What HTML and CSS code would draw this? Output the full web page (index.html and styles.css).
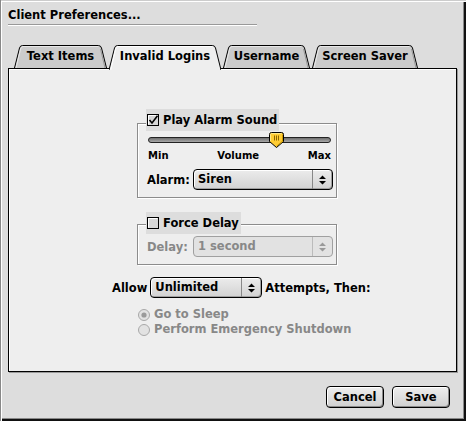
FILE: index.html
```html
<!DOCTYPE html>
<html lang="en">
<head>
  <meta charset="UTF-8" />
  <meta name="viewport" content="width=device-width, initial-scale=1.0"/>
  <title>Client Preferences</title>
  <link rel="stylesheet" href="styles.css">
</head>
<body>
  <div class="window">
    <h1 class="title">Client Preferences...</h1>
    <div class="title-rule"></div>

    <div class="tabs">
      <div class="tab tab-text">
        <svg class="tab-shape" width="93" height="23" viewBox="0 0 93 23">
          <path d="M0.5 23L5.5 3Q6.2 0.5 8.5 0.5H84.5Q86.8 0.5 87.5 3L92.5 23" fill="#cbcbcb" stroke="#000"/>
          <path d="M2 23L6.6 4Q7.3 1.5 9 1.5H84" fill="none" stroke="#e8e8e8"/>
          <path d="M86.5 4L91 23" fill="none" stroke="#999"/>
        </svg>
        <span class="tab-label">Text Items</span>
      </div>
      <div class="tab tab-logins is-active">
        <svg class="tab-shape" width="112" height="25" viewBox="0 0 112 25">
          <path d="M0 25L5.5 3Q6.2 0.5 8.5 0.5H103.5Q105.8 0.5 106.5 3L112 25" fill="#eee" stroke="#000"/>
          <path d="M1.8 25L6.6 4Q7.3 1.5 9 1.5H103" fill="none" stroke="#fff"/>
        </svg>
        <span class="tab-label">Invalid Logins</span>
      </div>
      <div class="tab tab-user">
        <svg class="tab-shape" width="87" height="23" viewBox="0 0 87 23">
          <path d="M0.5 23L5.5 3Q6.2 0.5 8.5 0.5H78.5Q80.8 0.5 81.5 3L86.5 23" fill="#cbcbcb" stroke="#000"/>
          <path d="M2 23L6.6 4Q7.3 1.5 9 1.5H78" fill="none" stroke="#e8e8e8"/>
          <path d="M80.5 4L85 23" fill="none" stroke="#999"/>
        </svg>
        <span class="tab-label">Username</span>
      </div>
      <div class="tab tab-saver">
        <svg class="tab-shape" width="106" height="23" viewBox="0 0 106 23">
          <path d="M0.5 23L5.5 3Q6.2 0.5 8.5 0.5H97.5Q99.8 0.5 100.5 3L105.5 23" fill="#cbcbcb" stroke="#000"/>
          <path d="M2 23L6.6 4Q7.3 1.5 9 1.5H97" fill="none" stroke="#e8e8e8"/>
          <path d="M99.5 4L104 23" fill="none" stroke="#999"/>
        </svg>
        <span class="tab-label">Screen Saver</span>
      </div>
    </div>

    <div class="panel">
      <div class="group group-alarm">
        <div class="legend">
          <svg class="checkbox" width="12" height="12" viewBox="0 0 12 12">
            <rect x="0.5" y="0.5" width="11" height="11" fill="#d6d6d6" stroke="#000"/>
            <path d="M1.5 10.5V1.5H10.5" fill="none" stroke="#fff"/>
            <path d="M2.5 6L5 9L10.5 1.8" fill="none" stroke="#000" stroke-width="1.6"/>
          </svg>
          <span>Play Alarm Sound</span>
        </div>
        <div class="slider">
          <svg class="slider-thumb" width="15" height="16" viewBox="0 0 15 16">
            <path d="M0.5 2.5Q0.5 0.5 2.5 0.5H12.5Q14.5 0.5 14.5 2.5V9.5L7.5 15.5L0.5 9.5Z" fill="#fc3" stroke="#000"/>
            <path d="M1.5 9V2.5Q1.5 1.5 2.5 1.5H12.5" fill="none" stroke="#ffe88a"/>
            <path d="M13.5 2.5V9.1L7.5 14.2" fill="none" stroke="#c90"/>
            <path d="M5.5 3.5V8.5M7.5 3.5V8.5M9.5 3.5V8.5" stroke="#8a6400"/>
          </svg>
        </div>
        <div class="slider-labels">
          <span>Min</span>
          <span>Volume</span>
          <span>Max</span>
        </div>
        <div class="field">
          <span>Alarm:</span>
          <div class="popup popup-alarm">
            <span class="popup-value">Siren</span>
            <span class="popup-arrows">
              <svg width="7" height="10" viewBox="0 0 7 10"><path d="M0 4H7L3.5 0.5ZM0 6H7L3.5 9.5Z" fill="#000"/></svg>
            </span>
          </div>
        </div>
      </div>

      <div class="group group-delay">
        <div class="legend">
          <svg class="checkbox" width="12" height="12" viewBox="0 0 12 12">
            <rect x="0.5" y="0.5" width="11" height="11" fill="#d6d6d6" stroke="#000"/>
            <path d="M1.5 10.5V1.5H10.5" fill="none" stroke="#fff"/>
          </svg>
          <span>Force Delay</span>
        </div>
        <div class="field is-disabled">
          <span>Delay:</span>
          <div class="popup popup-delay">
            <span class="popup-value">1 second</span>
            <span class="popup-arrows">
              <svg width="7" height="10" viewBox="0 0 7 10"><path d="M0 4H7L3.5 0.5ZM0 6H7L3.5 9.5Z" fill="#999"/></svg>
            </span>
          </div>
        </div>
      </div>

      <div class="allow-row">
        <span>Allow</span>
        <div class="popup popup-attempts">
          <span class="popup-value">Unlimited</span>
          <span class="popup-arrows">
            <svg width="7" height="10" viewBox="0 0 7 10"><path d="M0 4H7L3.5 0.5ZM0 6H7L3.5 9.5Z" fill="#000"/></svg>
          </span>
        </div>
        <span>Attempts, Then:</span>
      </div>

      <div class="radios">
        <div class="radio">
          <svg width="12" height="12" viewBox="0 0 12 12">
            <circle cx="6" cy="6" r="5.5" fill="#e2e2e2" stroke="#a8a8a8"/>
            <circle cx="6" cy="6" r="2.6" fill="#9a9a9a"/>
          </svg>
          <span>Go to Sleep</span>
        </div>
        <div class="radio">
          <svg width="12" height="12" viewBox="0 0 12 12">
            <circle cx="6" cy="6" r="5.5" fill="#e2e2e2" stroke="#a8a8a8"/>
          </svg>
          <span>Perform Emergency Shutdown</span>
        </div>
      </div>
    </div>

    <div class="footer">
      <button class="button">Cancel</button>
      <button class="button">Save</button>
    </div>
  </div>
</body>
</html>
```

FILE: styles.css
```css
* {
  box-sizing: border-box;
  margin: 0;
  padding: 0;
}

body {
  background: #ddd;
}

.window {
  width: 466px;
  height: 421px;
  background: #ddd;
  overflow: hidden;
  color: #000;
  font-family: "DejaVu Sans", "Liberation Sans", sans-serif;
  font-size: 11.5px;
  font-weight: bold;
  box-shadow:
    inset 1px 0 0 #888,
    inset 0 1px 0 #ccc,
    inset 2px 2px 0 #fff,
    inset -2px -2px 0 #111,
    inset -3px -3px 0 #888;
}

.title {
  padding: 7px 0 0 8px;
  font-size: 11.5px;
  line-height: 16px;
}

.title-rule {
  margin: 1px 0 0 8px;
  width: 249px;
  height: 2px;
  border-top: 1px solid #999;
  border-bottom: 1px solid #fff;
}

/* tabs */

.tabs {
  position: relative;
  z-index: 2;
  display: flex;
  align-items: flex-start;
  gap: 2px;
  height: 23px;
  margin: 19px 0 0 14px;
}

.tab {
  position: relative;
  height: 23px;
}

.tab.is-active {
  height: 25px;
}

.tab-shape {
  position: absolute;
  top: 0;
  left: 0;
}

.tab-label {
  position: relative;
  display: block;
  line-height: 23px;
  text-align: center;
}

.tab-text { width: 93px; }
.tab-logins { width: 112px; }
.tab-user { width: 87px; }
.tab-saver { width: 106px; }

.panel {
  position: relative;
  z-index: 1;
  margin-left: 8px;
  width: 449px;
  height: 304px;
  border: 1px solid #000;
  background: #eee;
  box-shadow: inset 1px 1px 0 #fff, 1px 1px 0 #999;
}

/* group boxes */

.group {
  margin-left: 128px;
  width: 200px;
  padding-bottom: 7px;
  border: 1px solid #8c8c8c;
  box-shadow: inset 1px 1px 0 #fff, 1px 1px 0 #fff;
}

.group-alarm {
  margin-top: 54px;
}

.group-delay {
  margin-top: 26px;
}

.legend {
  display: flex;
  align-items: center;
  gap: 4px;
  width: max-content;
  height: 22px;
  margin: -15px 0 0 8px;
  padding: 0 2px 0 1px;
  background: #ddd;
}

.group-delay .legend {
  margin-top: -13px;
}

.checkbox {
  display: block;
  flex: none;
}

.slider {
  position: relative;
  margin: 6px 0 0 10px;
  width: 183px;
  height: 6px;
  border: 1px solid #222;
  border-radius: 3px;
  background: linear-gradient(#6e6e6e, #a8a8a8);
}

.slider-thumb {
  position: absolute;
  top: -6px;
  left: 120px;
}

.slider-labels {
  display: flex;
  justify-content: space-between;
  margin: 7px 0 0 10px;
  width: 183px;
  font-size: 10px;
  line-height: 12px;
}

.field {
  display: flex;
  align-items: center;
  justify-content: space-between;
  margin: 7px 0 0 9px;
  width: 186px;
}

.group-delay .field {
  margin-top: 2px;
}

.field.is-disabled {
  color: #888;
}

/* popup menus */

.popup {
  display: flex;
  height: 21px;
  border: 1px solid #000;
  border-radius: 4px;
  background: linear-gradient(#ececec, #d2d2d2);
  box-shadow: inset 1px 1px 0 #fff, inset -1px -1px 0 #a0a0a0;
}

.popup-value {
  flex: 1;
  padding-left: 4px;
  line-height: 19px;
}

.popup-arrows {
  display: flex;
  align-items: center;
  justify-content: center;
  width: 20px;
  border-left: 1px solid #888;
}

.popup-alarm { width: 140px; }
.popup-attempts { width: 112px; }

.popup-delay {
  width: 140px;
  border-color: #a0a0a0;
  background: #e2e2e2;
  box-shadow: none;
}

.popup-delay .popup-arrows {
  border-left-color: #bbb;
}

.allow-row {
  display: flex;
  align-items: center;
  gap: 3px;
  margin: 12px 0 0 103px;
}

.radios {
  margin: 9px 0 0 129px;
  color: #888;
}

.radio {
  display: flex;
  align-items: center;
  gap: 4px;
  line-height: 15px;
}

.radio svg {
  display: block;
  flex: none;
}

/* buttons */

.footer {
  display: flex;
  justify-content: flex-end;
  gap: 8px;
  margin-top: 14px;
  padding-right: 16px;
}

.button {
  width: 58px;
  height: 22px;
  border: 1px solid #000;
  border-radius: 4px;
  background: linear-gradient(#eee, #d0d0d0);
  box-shadow: inset 1px 1px 0 #fff, inset -1px -1px 0 #8a8a8a;
  color: #000;
  font: inherit;
  line-height: 20px;
}
```
